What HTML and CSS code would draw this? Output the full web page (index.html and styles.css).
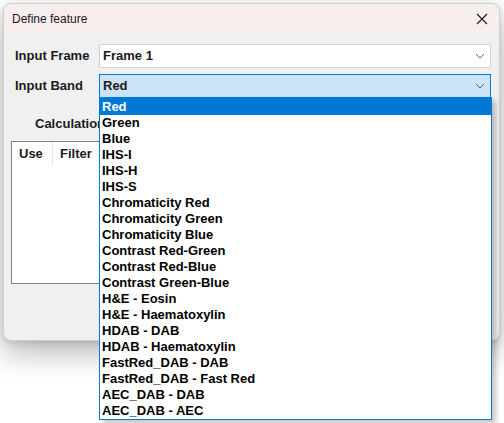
FILE: index.html
```html
<!DOCTYPE html>
<html>
<head>
<meta charset="utf-8">
<link rel="stylesheet" href="styles.css">
</head>
<body>
<div class="window">
  <div class="titlebar">
    <span class="title">Define feature</span>
    <svg class="close" width="12" height="12" viewBox="0 0 12 12"><path d="M1 1 L11 11 M11 1 L1 11" stroke="#1a1a1a" stroke-width="1.1" fill="none"/></svg>
  </div>
  <div class="client">
    <div class="row">
      <span class="label">Input Frame</span>
      <div class="combo">
        <span class="value">Frame 1</span>
        <svg class="chev" width="10" height="6" viewBox="0 0 10 6"><path d="M1 1 L5 5 L9 1" stroke="#606060" stroke-width="1" fill="none"/></svg>
      </div>
    </div>
    <div class="row">
      <span class="label">Input Band</span>
      <div class="combo open">
        <span class="value">Red</span>
        <svg class="chev" width="10" height="6" viewBox="0 0 10 6"><path d="M1 1 L5 5 L9 1" stroke="#606060" stroke-width="1" fill="none"/></svg>
        <ul class="list">
          <li class="sel">Red</li>
          <li>Green</li>
          <li>Blue</li>
          <li>IHS-I</li>
          <li>IHS-H</li>
          <li>IHS-S</li>
          <li>Chromaticity Red</li>
          <li>Chromaticity Green</li>
          <li>Chromaticity Blue</li>
          <li>Contrast Red-Green</li>
          <li>Contrast Red-Blue</li>
          <li>Contrast Green-Blue</li>
          <li>H&amp;E - Eosin</li>
          <li>H&amp;E - Haematoxylin</li>
          <li>HDAB - DAB</li>
          <li>HDAB - Haematoxylin</li>
          <li>FastRed_DAB - DAB</li>
          <li>FastRed_DAB - Fast Red</li>
          <li>AEC_DAB - DAB</li>
          <li>AEC_DAB - AEC</li>
        </ul>
      </div>
    </div>
    <div class="calc">Calculation</div>
    <div class="table">
      <div class="thead">
        <div class="th th-use">Use</div>
        <div class="th">Filter</div>
      </div>
    </div>
  </div>
</div>
</body>
</html>
```
FILE: styles.css
```css
html, body {
  margin: 0;
  padding: 0;
}
body {
  width: 504px;
  height: 423px;
  overflow: hidden;
  background: #ffffff;
  font-family: "Liberation Sans", Arial, sans-serif;
  color: #000;
}
.window {
  margin: 3px 0 0 3px;
  width: 495px;
  height: 336px;
  border: 1px solid #cfcfcf;
  border-radius: 8px;
  background: #f0f0f0;
  box-shadow: 0 12px 30px rgba(0,0,0,0.28), 0 2px 6px rgba(0,0,0,0.12);
  overflow: visible;
  position: relative;
}
.titlebar {
  height: 29px;
  background: #f9eeee;
  border-radius: 8px 8px 0 0;
  display: flex;
  align-items: center;
  justify-content: space-between;
  padding: 0 8px 0 8px;
}
.title {
  font-size: 12px;
  color: #1a1a1a;
}
.close {
  margin-right: 3px;
  margin-top: 1px;
}
.client {
  padding: 11px 0 0 11px;
  display: flex;
  flex-direction: column;
}
.row {
  display: flex;
  align-items: center;
  height: 23px;
  margin-bottom: 7px;
}
.label {
  width: 84px;
  font-size: 13px;
  font-weight: 700;
  color: #1a1a1a;
}
.combo {
  position: relative;
  box-sizing: border-box;
  width: 392px;
  height: 24px;
  background: #ffffff;
  border: 1px solid #cfcfcf;
  border-radius: 2px;
  display: flex;
  align-items: center;
  justify-content: space-between;
  padding: 0 5px 0 3px;
}
.combo.open {
  background: #cce4f7;
  border-color: #0078d7;
  border-radius: 0;
}
.value {
  font-size: 13px;
  font-weight: 700;
  color: #1a1a1a;
}
.list {
  position: absolute;
  top: 22px;
  left: -1px;
  box-sizing: border-box;
  width: 393px;
  height: 323px;
  margin: 0;
  padding: 0;
  list-style: none;
  background: #ffffff;
  border: 1px solid #0078d7;
  box-shadow: 4px 4px 5px rgba(0,0,0,0.22);
  z-index: 5;
}
.list li {
  height: 16px;
  line-height: 16px;
  padding-left: 2px;
  font-size: 13px;
  font-weight: 700;
  color: #000;
  white-space: nowrap;
}
.list li.sel {
  height: 17px;
  line-height: 17px;
  background: #0078d7;
  color: #ffffff;
}
.calc {
  margin: 12px 0 0 20px;
  width: 64px;
  overflow: hidden;
  white-space: nowrap;
  height: 16px;
  line-height: 16px;
  font-size: 13px;
  font-weight: 700;
  color: #1a1a1a;
}
.table {
  margin: 9px 0 0 -4px;
  box-sizing: border-box;
  width: 480px;
  height: 143px;
  background: #ffffff;
  border: 1px solid #828282;
}
.thead {
  display: flex;
  height: 23px;
}
.th {
  box-sizing: border-box;
  padding-left: 7px;
  line-height: 23px;
  font-size: 13px;
  font-weight: 700;
  color: #1a1a1a;
}
.th-use {
  width: 41px;
  border-right: 1px solid #e5e5e5;
}
```
